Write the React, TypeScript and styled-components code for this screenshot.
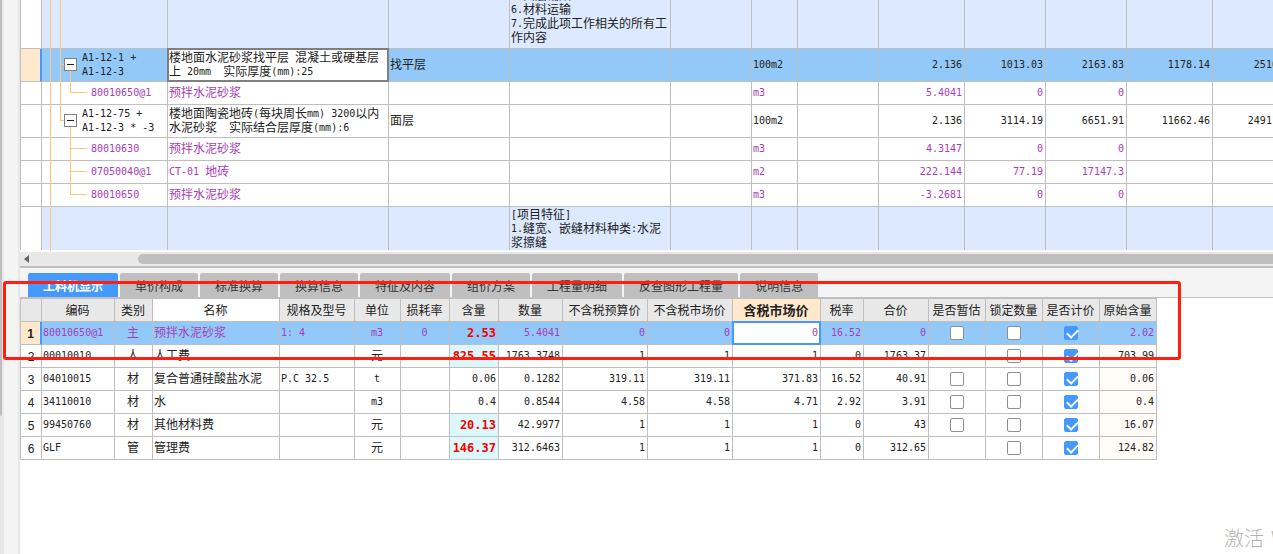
import React, { useState } from 'react';
import styled, { createGlobalStyle, css } from 'styled-components';

const GRID = '#bfbfbf';
const BLUE = '#4499ff';
const SELECTED = '#93c9f8';
const PEACH = '#ffe8cb';
const PURPLE = '#a63db8';
const INK = '#222222';

const GlobalStyle = createGlobalStyle`
  * { box-sizing: border-box; }
  body {
    margin: 0;
    background: #ffffff;
    color: ${INK};
    font: 12px/14px "Noto Sans CJK SC", "Liberation Sans", sans-serif;
  }
`;

const Page = styled.div`
  position: relative;
  display: flex;
  min-height: 100vh;
  overflow: hidden;
`;

const Rail = styled.div`
  flex: none;
  width: 20px;
  background: #f4f4f4;
  border-left: 4px solid #e8e8e8;
  border-right: 2px solid #e8e8e8;
`;

const RailThumb = styled.div`
  width: 2px;
  height: 75vh;
  margin-left: -4px;
  background: ${GRID};
  border-radius: 0 0 2px 0;
`;

const Main = styled.main`
  flex: 1;
  min-width: 0;
  overflow: hidden;
`;

/* Text: Latin runs are set in a half-width face beside full-width Chinese. */
const Latin = styled.span`
  font-family: "DejaVu Sans Mono", "Liberation Mono", monospace;
  font-size: 10px;
  line-height: 10px;
  vertical-align: 1px;
`;

const Line = styled.div`
  white-space: pre;
`;

function Mixed({ text }: { text: string }) {
  return (
    <>
      {text.split('\n').map((line, i) => (
        <Line key={i}>
          {line.split(/([\x20-\x7e]+)/).filter(Boolean).map((run, j) =>
            /^[\x20-\x7e]/.test(run) ? <Latin key={j}>{run}</Latin> : run,
          )}
        </Line>
      ))}
    </>
  );
}

/* Shared grid */
const Grid = styled.table<{ $width: number }>`
  width: ${(p) => p.$width}px;
  table-layout: fixed;
  border-collapse: separate;
  border-spacing: 0;
  border-left: 1px solid ${GRID};
`;

type Align = 'left' | 'center' | 'right';

const Cell = styled.td<{ $align?: Align; $bg?: string; $focus?: string }>`
  padding: 0 2px 2px 1px;
  border-right: 1px solid ${GRID};
  border-bottom: 1px solid ${GRID};
  text-align: ${(p) => p.$align ?? 'left'};
  vertical-align: middle;
  background: ${(p) => p.$bg ?? 'transparent'};
  ${(p) =>
    p.$focus &&
    css`
      position: relative;
      background: #ffffff;
      &::after {
        content: '';
        position: absolute;
        inset: -1px;
        border: 2px solid ${p.$focus};
      }
    `}
`;

/* Cells whose content fills the row: tree lines, long texts, tick boxes. */
const FlushCell = styled(Cell)`
  padding-bottom: 0;
`;

const RowHead = styled.th<{ $active?: boolean }>`
  padding: 2px 0 0;
  border-right: 1px solid ${GRID};
  border-bottom: 1px solid ${GRID};
  background: #ffffff;
  color: ${INK};
  font-family: "Liberation Sans", sans-serif;
  font-weight: normal;
  text-align: center;
  ${(p) =>
    p.$active &&
    css`
      background: ${PEACH};
      border-right: 2px solid ${BLUE};
      font-weight: bold;
    `}
`;

/* Upper grid */
const UpperRow = styled.tr<{ $height: number; $tone: 'plain' | 'group' | 'selected'; $purple?: boolean }>`
  height: ${(p) => p.$height}px;
  color: ${(p) => (p.$purple ? PURPLE : INK)};
  background: ${(p) => ({ plain: '#ffffff', group: '#dde9fe', selected: SELECTED })[p.$tone]};
  &:last-child > * {
    border-bottom: 0;
  }
`;

const TreeCell = styled(FlushCell)`
  padding: 0;
`;

const TreeItem = styled.div`
  display: flex;
  align-items: center;
`;

const TreeText = styled.div<{ $indent: boolean }>`
  padding-bottom: 2px;
  margin-left: ${(p) => (p.$indent ? 49 : 40)}px;
`;

const TreeSvg = styled.svg<{ $indent: boolean }>`
  display: block;
  flex: none;
  overflow: visible;
  margin-right: ${(p) => (p.$indent ? -49 : -40)}px;
`;

const ClipTop = styled.div`
  display: flex;
  flex-direction: column;
  justify-content: flex-end;
  height: 48px;
  padding-bottom: 4px;
  overflow: hidden;
`;

const ClipBottom = styled.div`
  height: 43px;
  overflow: hidden;
`;

const UpperPane = styled.section`
  overflow: hidden;
  padding-bottom: 2px;
`;

type TreeKind = 'root' | 'node' | 'lastNode' | 'child' | 'lastChild' | 'soleChild' | 'tail';

function TreeLines({ kind, height }: { kind: TreeKind; height: number }) {
  const mid = Math.floor((height - 1) / 2);
  const isNode = kind === 'node' || kind === 'lastNode';
  const isChild = kind === 'child' || kind === 'lastChild' || kind === 'soleChild';
  const through = kind === 'root' || kind === 'node' || kind === 'soleChild';
  return (
    <TreeSvg $indent={isChild} width={isChild ? 49 : 40} height={height - 1} aria-hidden="true">
      <g fill="#ffc67e">
        <rect x="8" y="0" width="1" height={height} />
        {through && <rect x="18" y="0" width="1" height={height} />}
        {kind === 'lastNode' && <rect x="18" y="0" width="1" height={mid} />}
        {isNode && <rect x="18" y={mid - 1} width="5" height="1" />}
        {isNode && <rect x="28" y={mid + 6} width="1" height={height - mid - 6} />}
        {isChild && <rect x="28" y="0" width="1" height={kind === 'child' ? height : mid} />}
        {isChild && <rect x="28" y={mid - 1} width="17" height="1" />}
      </g>
      {isNode && (
        <g>
          <rect x="22.5" y={mid - 6.5} width="12" height="12" fill="#ffffff" stroke="#7f7f7f" />
          <rect x="25" y={mid - 1} width="7" height="1" fill="#222222" />
        </g>
      )}
    </TreeSvg>
  );
}

interface UpperData {
  kind: TreeKind;
  height: number;
  code: string;
  name: string;
  note?: string;
  feature?: string;
  unit?: string;
  nums: string[];
}

const upperCols = [21, 126, 221, 121, 161, 81, 46, 81, 86, 81, 81, 86, 86];

const upperRows: UpperData[] = [
  { kind: 'root', height: 49, code: '', name: '', feature: '5.面层铺贴\n6.材料运输\n7.完成此项工作相关的所有工\n作内容', nums: ['', '', '', '', ''] },
  { kind: 'node', height: 33, code: 'A1-12-1 +\nA1-12-3', name: '楼地面水泥砂浆找平层 混凝土或硬基层\n上 20mm  实际厚度(mm):25', note: '找平层', unit: '100m2', nums: ['2.136', '1013.03', '2163.83', '1178.14', '2516.51'] },
  { kind: 'soleChild', height: 23, code: '80010650@1', name: '预拌水泥砂浆', unit: 'm3', nums: ['5.4041', '0', '0', '', ''] },
  { kind: 'lastNode', height: 33, code: 'A1-12-75 +\nA1-12-3 * -3', name: '楼地面陶瓷地砖(每块周长mm) 3200以内\n水泥砂浆  实际结合层厚度(mm):6', note: '面层', unit: '100m2', nums: ['2.136', '3114.19', '6651.91', '11662.46', '24911.01'] },
  { kind: 'child', height: 23, code: '80010630', name: '预拌水泥砂浆', unit: 'm3', nums: ['4.3147', '0', '0', '', ''] },
  { kind: 'child', height: 23, code: '07050040@1', name: 'CT-01 地砖', unit: 'm2', nums: ['222.144', '77.19', '17147.3', '', ''] },
  { kind: 'lastChild', height: 23, code: '80010650', name: '预拌水泥砂浆', unit: 'm3', nums: ['-3.2681', '0', '0', '', ''] },
  { kind: 'tail', height: 43, code: '', name: '', feature: '[项目特征]\n1.缝宽、嵌缝材料种类:水泥\n浆擦缝', nums: ['', '', '', '', ''] },
];

function UpperGrid() {
  return (
    <UpperPane>
      <Grid $width={upperCols.reduce((a, b) => a + b, 1)}>
        <colgroup>
          {upperCols.map((w, i) => (
            <col key={i} style={{ width: w }} />
          ))}
        </colgroup>
        <tbody>
          {upperRows.map((row, i) => {
            const selected = row.kind === 'node';
            const group = row.kind === 'root' || row.kind === 'tail';
            const isChild = /child/i.test(row.kind);
            const Clip = row.kind === 'root' ? ClipTop : ClipBottom;
            return (
              <UpperRow
                key={i}
                $height={row.height}
                $tone={selected ? 'selected' : group ? 'group' : 'plain'}
                $purple={isChild}
              >
                <RowHead $active={selected} />
                <TreeCell>
                  <TreeItem>
                    <TreeLines kind={row.kind} height={row.height} />
                    {row.code && (
                      <TreeText $indent={isChild}>
                        <Mixed text={row.code} />
                      </TreeText>
                    )}
                  </TreeItem>
                </TreeCell>
                <Cell $focus={selected ? '#7f7f7f' : undefined}>{row.name && <Mixed text={row.name} />}</Cell>
                <Cell>{row.note && <Mixed text={row.note} />}</Cell>
                <FlushCell>{row.feature && <Clip><Mixed text={row.feature} /></Clip>}</FlushCell>
                <Cell />
                <Cell>{row.unit && <Mixed text={row.unit} />}</Cell>
                <Cell />
                {row.nums.map((n, j) => (
                  <Cell key={j} $align="right">{n && <Mixed text={n} />}</Cell>
                ))}
              </UpperRow>
            );
          })}
        </tbody>
      </Grid>
    </UpperPane>
  );
}

/* Horizontal scroll bar */
const ScrollTrack = styled.div`
  display: flex;
  align-items: center;
  gap: 109px;
  height: 16px;
  padding-left: 4px;
  background: #e8e8e8;
  border-bottom: 2px solid ${GRID};
`;

const ScrollArrow = styled.svg`
  display: block;
  flex: none;
`;

const ScrollThumb = styled.div`
  flex: 1;
  height: 10px;
  background: ${GRID};
  border-radius: 5px 0 0 5px;
`;

/* Tabs */
const TabBar = styled.div`
  display: flex;
  gap: 2px;
  padding: 5px 8px 0;
  background: #f4f4f4;
  border-bottom: 1px solid ${GRID};
`;

const Tab = styled.button<{ $active: boolean }>`
  height: 24px;
  padding: 1px 15px 0;
  border: 0;
  border-radius: 2px 2px 0 0;
  background: ${(p) => (p.$active ? BLUE : GRID)};
  color: ${(p) => (p.$active ? '#ffffff' : '#333333')};
  font: inherit;
  font-weight: ${(p) => (p.$active ? 'bold' : 'normal')};
  white-space: nowrap;
`;

const tabs = ['工料机显示', '单价构成', '标准换算', '换算信息', '特征及内容', '组价方案', '工程量明细', '反查图形工程量', '说明信息'];

/* Lower grid */
const LowerTable = styled(Grid)`
  border-top: 1px solid ${GRID};
`;

const ColHead = styled.th<{ $bg?: string; $strong?: boolean }>`
  height: 23px;
  padding: 0 1px 0 0;
  border-right: 1px solid ${GRID};
  border-bottom: 1px solid ${GRID};
  background: ${(p) => p.$bg ?? '#e8e8e8'};
  font-size: ${(p) => (p.$strong ? 13 : 12)}px;
  font-weight: ${(p) => (p.$strong ? 'bold' : 'normal')};
  white-space: nowrap;
`;

const LowerRow = styled.tr<{ $selected: boolean }>`
  height: 23px;
  color: ${(p) => (p.$selected ? PURPLE : INK)};
  background: ${(p) => (p.$selected ? SELECTED : '#ffffff')};
`;

const Strong = styled.strong`
  color: #f40000;
  font: bold 12px/14px "DejaVu Sans Mono", monospace;
`;

const Check = styled.input`
  appearance: none;
  position: relative;
  display: block;
  width: 14px;
  height: 14px;
  margin: 0 auto;
  border: 1px solid #8f8f8f;
  border-radius: 2px;
  background: #ffffff;
  &:checked {
    border-color: ${BLUE};
    background: ${BLUE};
  }
  &:checked::after {
    content: '';
    position: absolute;
    left: 4px;
    top: 0;
    width: 5px;
    height: 9px;
    border: solid #ffffff;
    border-width: 0 2px 2px 0;
    transform: rotate(45deg);
  }
`;

const lowerCols: [string, number][] = [
  ['', 21], ['编码', 73], ['类别', 38], ['名称', 127], ['规格及型号', 75], ['单位', 46], ['损耗率', 49], ['含量', 49], ['数量', 64],
  ['不含税预算价', 85], ['不含税市场价', 85], ['含税市场价', 88], ['税率', 43], ['合价', 65], ['是否暂估', 57], ['锁定数量', 57],
  ['是否计价', 57], ['原始含量', 57],
];

interface LowerData {
  code: string;
  kind: string;
  name: string;
  spec?: string;
  unit: string;
  loss?: string;
  content: string;
  marked?: boolean;
  nums: string[];
  provisional: boolean;
  original: string;
}

const lowerRows: LowerData[] = [
  { code: '80010650@1', kind: '主', name: '预拌水泥砂浆', spec: '1: 4', unit: 'm3', loss: '0', content: '2.53', marked: true, nums: ['5.4041', '0', '0', '0', '16.52', '0'], provisional: true, original: '2.02' },
  { code: '00010010', kind: '人', name: '人工费', unit: '元', content: '825.55', marked: true, nums: ['1763.3748', '1', '1', '1', '0', '1763.37'], provisional: false, original: '703.99' },
  { code: '04010015', kind: '材', name: '复合普通硅酸盐水泥', spec: 'P.C 32.5', unit: 't', content: '0.06', nums: ['0.1282', '319.11', '319.11', '371.83', '16.52', '40.91'], provisional: true, original: '0.06' },
  { code: '34110010', kind: '材', name: '水', unit: 'm3', content: '0.4', nums: ['0.8544', '4.58', '4.58', '4.71', '2.92', '3.91'], provisional: true, original: '0.4' },
  { code: '99450760', kind: '材', name: '其他材料费', unit: '元', content: '20.13', marked: true, nums: ['42.9977', '1', '1', '1', '0', '43'], provisional: true, original: '16.07' },
  { code: 'GLF', kind: '管', name: '管理费', unit: '元', content: '146.37', marked: true, nums: ['312.6463', '1', '1', '1', '0', '312.65'], provisional: false, original: '124.82' },
];

function LowerGrid() {
  return (
    <LowerTable $width={lowerCols.reduce((a, c) => a + c[1], 1)}>
      <colgroup>
        {lowerCols.map(([, w], i) => (
          <col key={i} style={{ width: w }} />
        ))}
      </colgroup>
      <thead>
        <tr>
          {lowerCols.map(([label], i) => (
            <ColHead
              key={i}
              scope="col"
              $strong={label === '含税市场价'}
              $bg={label === '含税市场价' ? PEACH : label === '名称' ? '#ffffff' : undefined}
            >
              {label}
            </ColHead>
          ))}
        </tr>
      </thead>
      <tbody>
        {lowerRows.map((row, i) => {
          const selected = i === 0;
          return (
            <LowerRow key={row.code} $selected={selected}>
              <RowHead scope="row" $active={selected}>{i + 1}</RowHead>
              <Cell><Mixed text={row.code} /></Cell>
              <Cell $align="center"><Mixed text={row.kind} /></Cell>
              <Cell><Mixed text={row.name} /></Cell>
              <Cell>{row.spec && <Mixed text={row.spec} />}</Cell>
              <Cell $align="center"><Mixed text={row.unit} /></Cell>
              <Cell $align="center">{row.loss && <Mixed text={row.loss} />}</Cell>
              <Cell $align="right" $bg={row.marked && !selected ? '#dcf8fa' : undefined}>
                {row.marked ? <Strong>{row.content}</Strong> : <Mixed text={row.content} />}
              </Cell>
              {row.nums.map((n, j) => (
                <Cell key={j} $align="right" $focus={selected && j === 3 ? BLUE : undefined}><Mixed text={n} /></Cell>
              ))}
              <FlushCell>{row.provisional && <Check type="checkbox" aria-label={`${row.name} 是否暂估`} />}</FlushCell>
              <FlushCell><Check type="checkbox" aria-label={`${row.name} 锁定数量`} /></FlushCell>
              <FlushCell><Check type="checkbox" defaultChecked aria-label={`${row.name} 是否计价`} /></FlushCell>
              <Cell $align="right" $bg={selected ? undefined : '#fffcf7'}><Mixed text={row.original} /></Cell>
            </LowerRow>
          );
        })}
      </tbody>
    </LowerTable>
  );
}

/* Overlays */
const Marker = styled.div`
  position: absolute;
  left: 3px;
  top: 281px;
  width: 1178px;
  height: 79px;
  border: 3px solid #ff1e10;
  border-radius: 3px;
  pointer-events: none;
`;

const Watermark = styled.div`
  position: absolute;
  right: 0;
  bottom: 4px;
  display: flex;
  gap: 7px;
  width: 49px;
  overflow: hidden;
  color: #b4b4b4;
  font-size: 20px;
  font-weight: 300;
  line-height: 24px;
  white-space: nowrap;
  pointer-events: none;
`;

const WatermarkWord = styled.span`
  flex: none;
`;

export default function App() {
  const [active, setActive] = useState(0);
  return (
    <Page>
      <GlobalStyle />
      <Rail><RailThumb /></Rail>
      <Main>
        <UpperGrid />
        <ScrollTrack>
          <ScrollArrow width="5" height="10" aria-hidden="true">
            <path d="M5 1v8L0 5z" fill="#666666" />
          </ScrollArrow>
          <ScrollThumb />
        </ScrollTrack>
        <TabBar role="tablist">
          {tabs.map((t, i) => (
            <Tab key={t} type="button" role="tab" aria-selected={i === active} $active={i === active} onClick={() => setActive(i)}>
              {t}
            </Tab>
          ))}
        </TabBar>
        <LowerGrid />
      </Main>
      <Marker />
      <Watermark>
        <WatermarkWord>激活</WatermarkWord>
        <WatermarkWord>Windows</WatermarkWord>
      </Watermark>
    </Page>
  );
}
